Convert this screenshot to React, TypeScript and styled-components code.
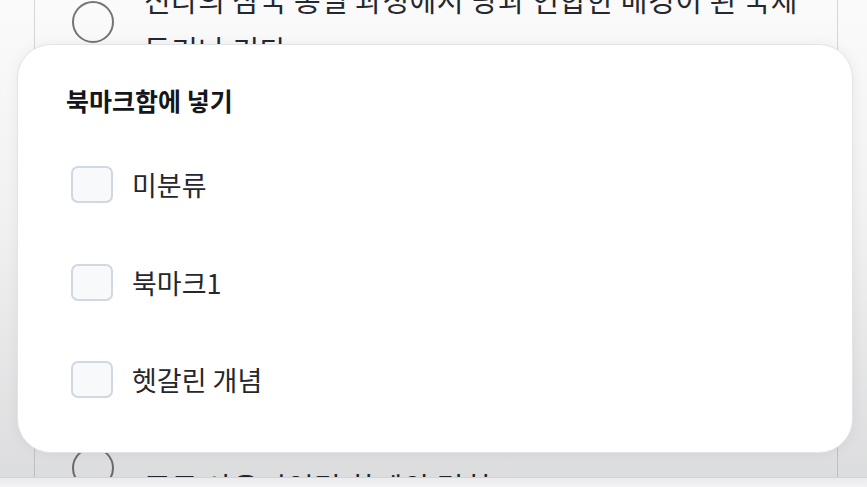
import React, { useState } from "react";
import styled, { createGlobalStyle } from "styled-components";

const GlobalStyle = createGlobalStyle`
  html, body {
    margin: 0;
    padding: 0;
    background: #ffffff;
    overflow: hidden;
  }
  * {
    box-sizing: border-box;
  }
`;

const Root = styled.div`
  position: relative;
  height: 100vh;
  display: flex;
  flex-direction: column;
  font-family: "Noto Sans CJK KR", "Noto Sans", sans-serif;
  overflow: hidden;
`;

const QuizArea = styled.main`
  flex: 1;
  overflow: hidden;
  padding: 0 29px 0 34px;
`;

const QuizCard = styled.section`
  height: 100%;
  border-left: 1px solid #dadbdd;
  border-right: 1px solid #dadbdd;
  padding: 0 0 0 37px;
  overflow: hidden;
`;

const OptionList = styled.ul`
  list-style: none;
  margin: -26px 0 0;
  padding: 0;
  display: flex;
  flex-direction: column;
  gap: 373px;
`;

const OptionRow = styled.li`
  display: flex;
  align-items: flex-start;
  gap: 30px;
`;

const Radio = styled.span<{ $top: number }>`
  flex: none;
  width: 42px;
  height: 42px;
  margin-top: ${(p) => p.$top}px;
  border: 2.5px solid #777777;
  border-radius: 50%;
`;

const OptionText = styled.p<{ $top: number }>`
  margin: 0;
  padding-top: ${(p) => p.$top}px;
  font-size: 29px;
  line-height: 50px;
  color: #25282d;
  letter-spacing: 0.5px;
  white-space: nowrap;
`;

const Dim = styled.div`
  position: absolute;
  inset: 0 0 10px 0;
  background: linear-gradient(
    to bottom,
    rgba(20, 24, 32, 0.02) 0%,
    rgba(20, 24, 32, 0.06) 45%,
    rgba(20, 24, 32, 0.15) 100%
  );
  pointer-events: none;
`;

const BottomBar = styled.footer`
  position: relative;
  z-index: 1;
  flex: none;
  height: 10px;
  border-top: 1px solid #d3d4d7;
  background: linear-gradient(to bottom, #eaebed, #f3f3f5);
`;

const Sheet = styled.div`
  position: absolute;
  z-index: 2;
  left: 17px;
  top: 44px;
  width: 836px;
  height: 409px;
  background: #ffffff;
  border: 1px solid #e3e4e8;
  border-radius: 34px;
  box-shadow: 0 0 14px rgba(30, 34, 44, 0.06);
  padding: 39px 48px 0;
`;

const SheetTitle = styled.h2`
  margin: 0 0 50px;
  font-size: 25px;
  line-height: 32px;
  font-weight: 700;
  color: #14161a;
`;

const FolderList = styled.div`
  display: flex;
  flex-direction: column;
  gap: 60.5px;
`;

const FolderRow = styled.label`
  display: flex;
  align-items: center;
  gap: 19px;
  height: 37px;
  cursor: pointer;
`;

const Box = styled.span<{ $checked: boolean }>`
  flex: none;
  width: 42px;
  height: 37px;
  margin-left: 5px;
  border: 2px solid ${(p) => (p.$checked ? "#3b82f6" : "#d1d8e2")};
  border-radius: 7px;
  background: ${(p) => (p.$checked ? "#3b82f6" : "#f8f9fb")};
`;

const FolderName = styled.span`
  font-size: 27px;
  line-height: 37px;
  color: #24272c;
`;

const folders = ["미분류", "북마크1", "헷갈린 개념"];

export default function App() {
  const [checked, setChecked] = useState<string[]>([]);

  const toggle = (name: string) =>
    setChecked((prev) =>
      prev.includes(name) ? prev.filter((n) => n !== name) : [...prev, name]
    );

  return (
    <Root>
      <GlobalStyle />
      <QuizArea>
        <QuizCard>
          <OptionList>
            <OptionRow>
              <Radio $top={27} />
              <OptionText $top={0}>
                신라의 삼국 통일 과정에서 당과 연합한 배경이 된 국제
                <br />
                동기나 기타
              </OptionText>
            </OptionRow>
            <OptionRow>
              <Radio $top={0} />
              <OptionText $top={14}>주로 사용되었던 화폐의 명칭</OptionText>
            </OptionRow>
          </OptionList>
        </QuizCard>
      </QuizArea>
      <BottomBar />
      <Dim />
      <Sheet>
        <SheetTitle>북마크함에 넣기</SheetTitle>
        <FolderList>
          {folders.map((name) => (
            <FolderRow key={name} onClick={() => toggle(name)}>
              <Box $checked={checked.includes(name)} />
              <FolderName>{name}</FolderName>
            </FolderRow>
          ))}
        </FolderList>
      </Sheet>
    </Root>
  );
}
